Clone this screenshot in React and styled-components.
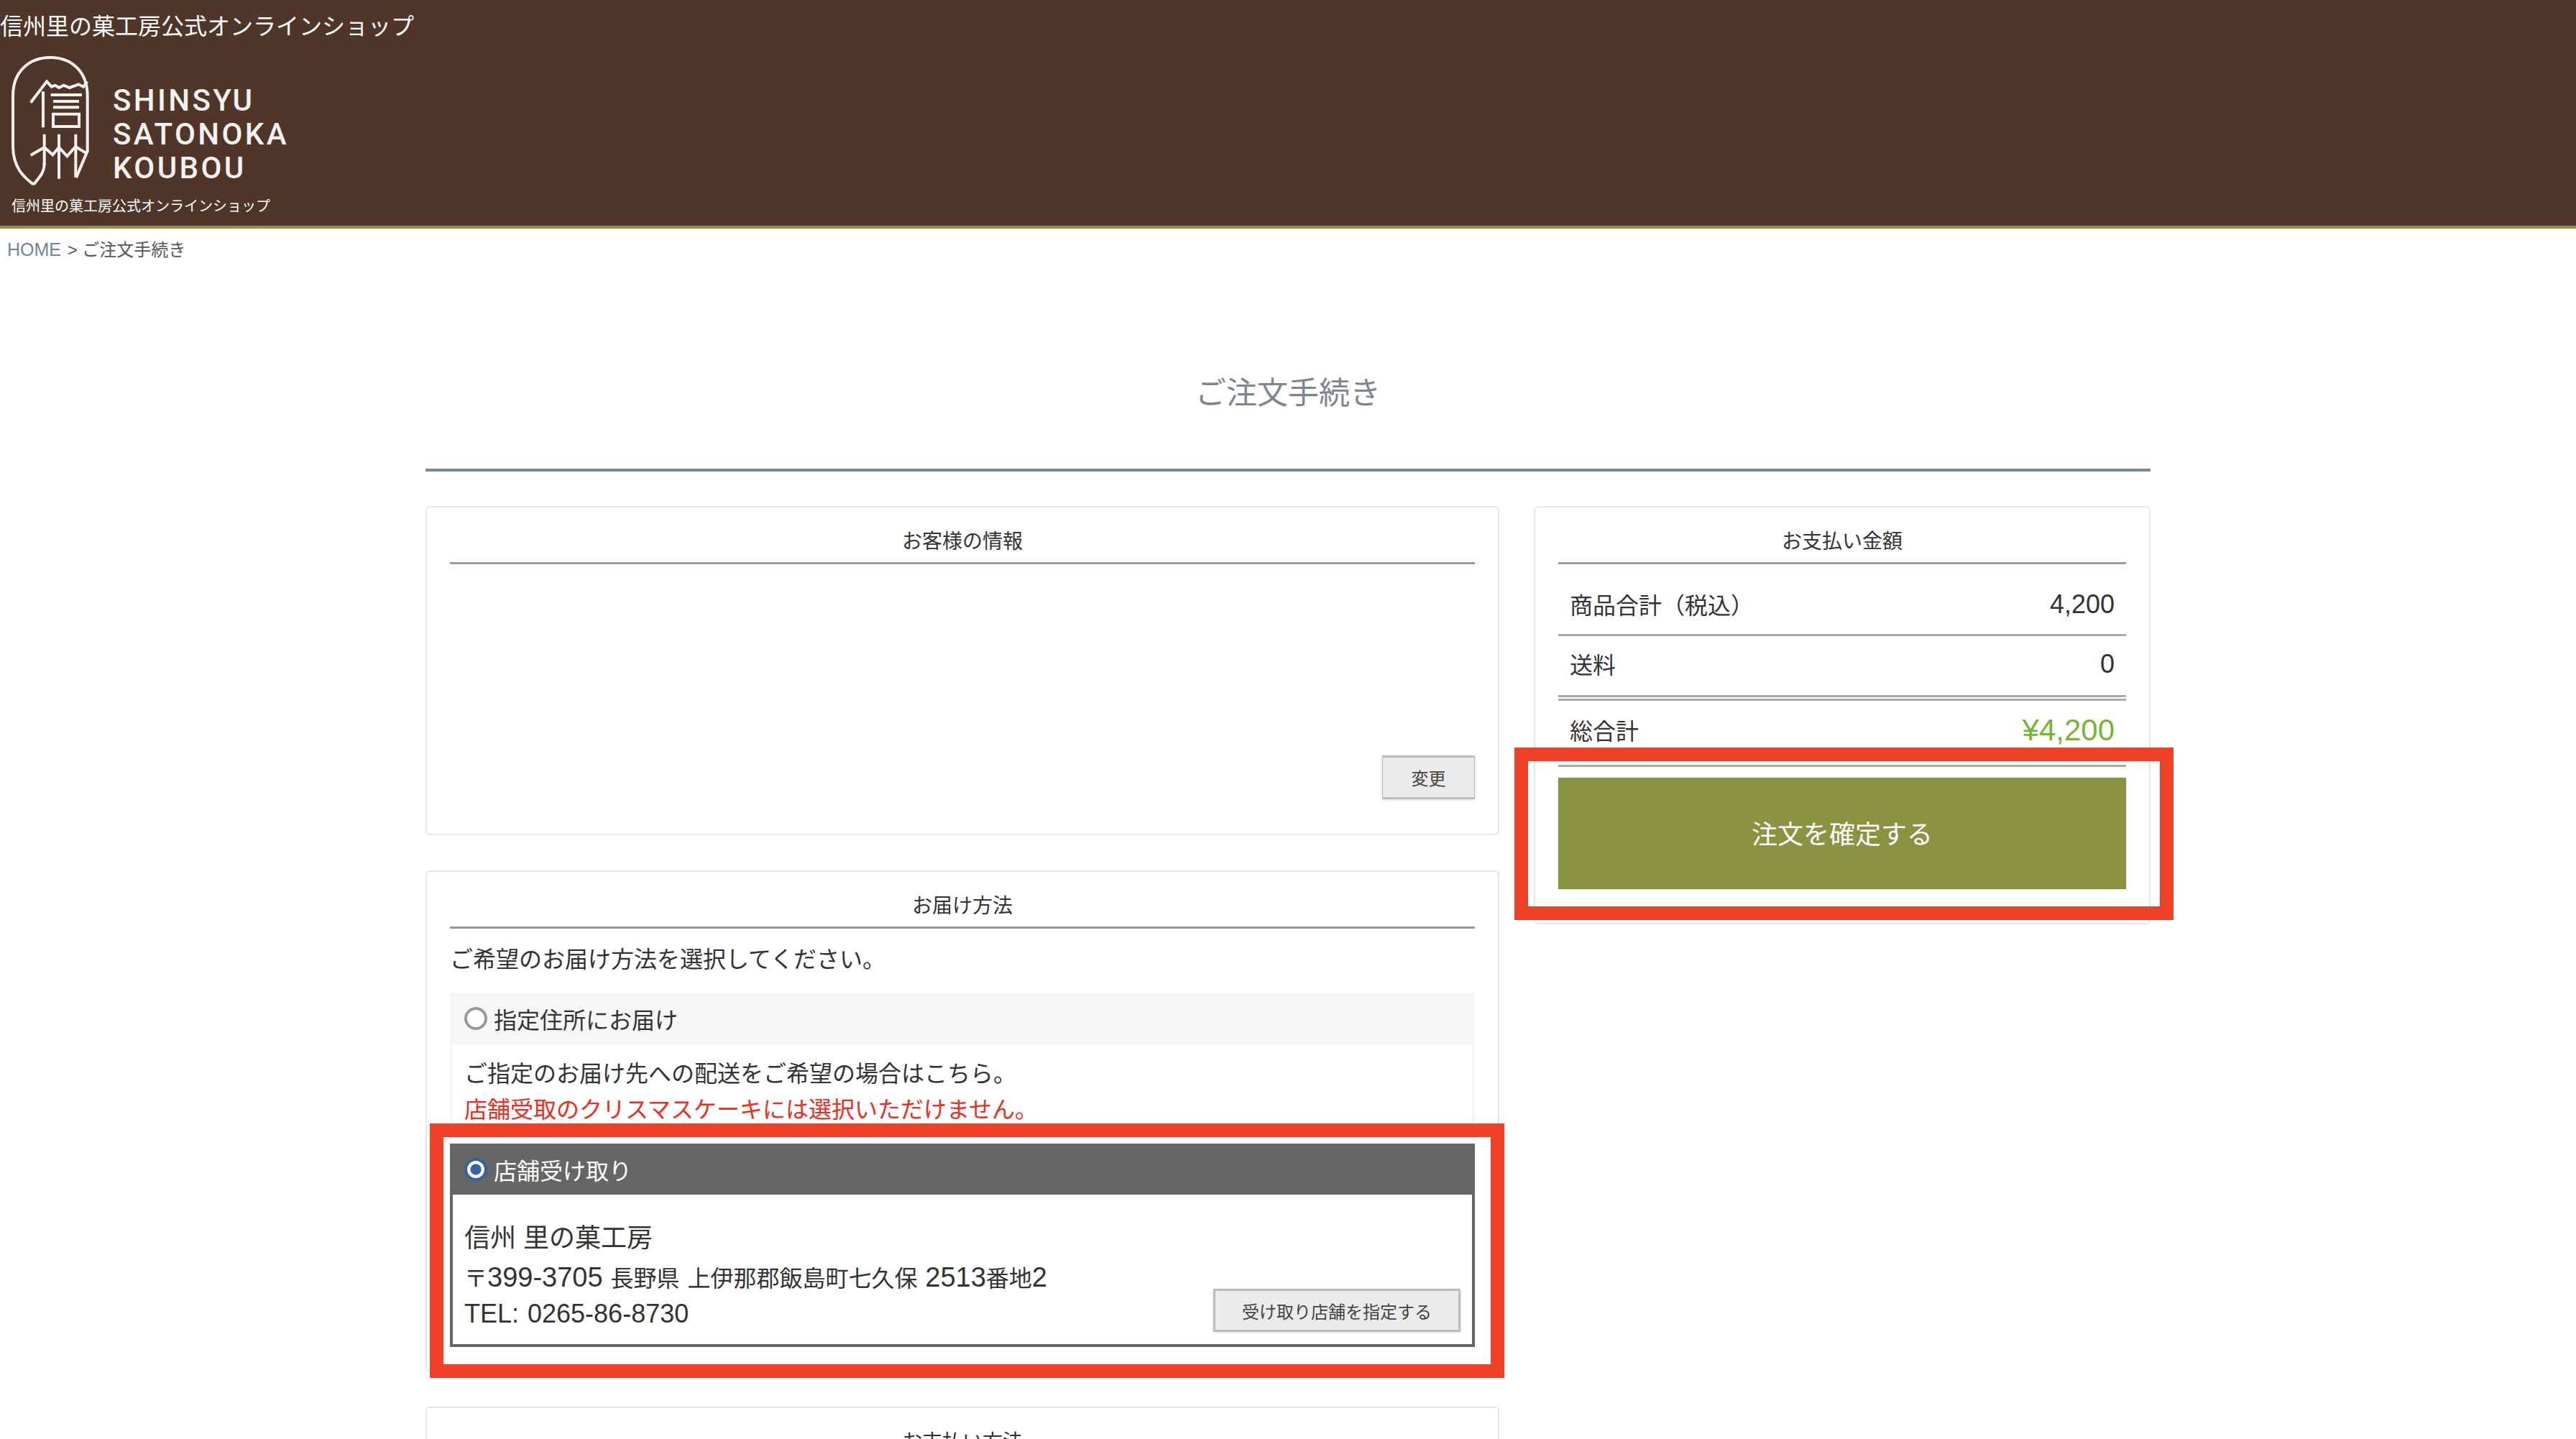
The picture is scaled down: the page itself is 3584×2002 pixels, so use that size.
import React from 'react'
import styled, { createGlobalStyle } from 'styled-components'

const GlobalStyle = createGlobalStyle`
  html, body {
    margin: 0;
    height: 2002px;
    overflow: hidden;
    background: #fff;
  }
  body {
    font-family: "Liberation Sans", "Noto Sans CJK JP", sans-serif;
    color: #333;
  }
  * { box-sizing: border-box; }
`

const TopBar = styled.header`
  height: 318px;
  background: #4f3629;
  border-bottom: 4px solid #8a9440;
  color: #fff;
`

const ShopName = styled.div`
  font-size: 32px;
  height: 70px;
  line-height: 74px;
`

const LogoRow = styled.div`
  display: flex;
  margin-left: 10px;
  gap: 22px;
`

const Wordmark = styled.div`
  padding-top: 46px;
  font-family: "Roboto", "Liberation Sans", sans-serif;
  font-weight: 500;
  font-size: 42px;
  line-height: 47px;
  letter-spacing: 3.4px;
  color: #f4f1ee;
`

const Caption = styled.div`
  margin: 7px 0 0 16px;
  font-size: 20px;
  line-height: 30px;
`

const Crumbs = styled.nav`
  height: 30px;
  margin-top: 14px;
  padding-left: 10px;
  font-size: 24px;
  line-height: 30px;
  color: #555;

  a { color: #71859a; text-decoration: none; font-size: 25px; margin-right: 2px; }
`

const Page = styled.main`
  width: 2400px;
  margin: 153px auto 0;
`

const PageTitle = styled.h1`
  margin: 0 0 48px;
  height: 141px;
  padding-top: 2px;
  border-bottom: 4px solid #7a8897;
  font-size: 43px;
  font-weight: 400;
  line-height: 60px;
  text-align: center;
  color: #7c8690;
`

const Columns = styled.div`
  display: grid;
  grid-template-columns: 1494px 858px;
  column-gap: 48px;
  align-items: start;
`

const LeftColumn = styled.div`
  display: flex;
  flex-direction: column;
  gap: 49px;
`

const Card = styled.section`
  border: 2px solid #e5e5e5;
  border-radius: 6px;
  padding: 0 32px;
  padding-bottom: ${p => p.$bottom || 32}px;
  background: #fff;
`

const CardTitle = styled.h2`
  margin: 0;
  padding: 30px 0 10px;
  border-bottom: 3px solid #999;
  font-size: 28px;
  font-weight: 400;
  line-height: 36px;
  text-align: center;
  color: #333;
`

const CustomerBody = styled.div`
  height: 266px;
`

const ButtonRow = styled.div`
  display: flex;
  justify-content: flex-end;
`

const GreyButton = styled.button`
  flex: none;
  height: ${p => p.$tall ? 61 : 60}px;
  width: ${p => p.$width}px;
  padding: 0;
  border: 3px solid #bdbdbd;
  border-left-width: ${p => p.$tall ? 1 : 3}px;
  border-right-width: ${p => p.$tall ? 1 : 3}px;
  background: #ebebeb;
  box-shadow: 0 1px 4px rgba(0, 0, 0, 0.15);
  font-family: inherit;
  font-size: 24px;
  color: #444;
`

const Intro = styled.p`
  margin: 18px 0 21px 0;
  font-size: 32px;
  line-height: 50px;
`

const OptionHead = styled.label`
  display: flex;
  align-items: center;
  gap: 9px;
  height: 72px;
  padding-left: 20px;
  background: ${p => p.$active ? '#666' : '#f6f6f6'};
  color: ${p => p.$active ? '#fff' : '#333'};
  font-size: 32px;
`

const Radio = styled.input.attrs({ type: 'radio', name: 'delivery' })`
  appearance: none;
  margin: 0;
  width: 32px;
  height: 32px;
  border-radius: 50%;
  border: 4px solid #999;
  background: #fff;

  &:checked {
    border-color: #3360a8;
    background: radial-gradient(circle, #3360a8 0 7px, #fff 8px);
  }
`

const PlainBody = styled.div`
  margin-bottom: 4px;
  padding: 16px 16px 18px;
  border: 4px solid #f6f6f6;
  border-top: 0;
  border-bottom: 0;
  font-size: 32px;
  line-height: 50px;
`

const Warning = styled.div`
  color: #ee2c20;
`

const StoreOption = styled.div`
  position: relative;
  border: 4px solid #666;
  border-top: 0;
`

const StoreHead = styled(OptionHead)`
  margin: 0 -4px;
  height: 71px;
`

const StoreBody = styled.div`
  display: flex;
  justify-content: space-between;
  align-items: flex-end;
  padding: 36px 16px 17px;
  font-size: 32px;
  line-height: 50px;
`

const StoreName = styled.div`
  font-size: 36px;
  margin-bottom: 4px;
`

const AddressLine = styled.div`
  height: ${p => p.$height || 50}px;
  word-spacing: 2px;
`

const Num = styled.span`
  font-size: ${p => p.$size || 36}px;
`

const Highlight = styled.div`
  position: absolute;
  top: ${p => p.$top}px;
  left: ${p => p.$left}px;
  right: ${p => p.$right}px;
  bottom: ${p => p.$bottom}px;
  border: 19px solid #ee4127;
  pointer-events: none;
`

const Row = styled.div`
  display: flex;
  justify-content: space-between;
  align-items: center;
  height: ${p => p.$height}px;
  padding: ${p => p.$shift > 0 ? p.$shift : 0}px 16px ${p => p.$shift < 0 ? -p.$shift : 0}px;
  border-bottom: ${p => p.$double ? '8px double #aaa' : '3px solid #aaa'};
  font-size: 32px;
`

const Amount = styled.span`
  padding-top: 2px;
  font-size: ${p => p.$total ? 42 : 36}px;
  color: ${p => p.$total ? '#76b52e' : '#333'};
`

const SubmitWrap = styled.div`
  position: relative;
  margin-top: 15px;
`

const SubmitButton = styled.button`
  display: block;
  width: 100%;
  height: 155px;
  padding: 0 0 3px;
  border: 0;
  background: #8a9440;
  box-shadow: 0 0 4px rgba(0, 0, 0, 0.15);
  font-family: inherit;
  font-size: 36px;
  color: #fff;
`

function Logo() {
  return (
    <svg width="125" height="195" viewBox="0 0 375 585" fill="none" stroke="#f4f1ee" strokeWidth="12">
      <path d="M110 560 C70 530 24 490 24 400 V190 C24 90 90 30 180 30 C270 30 335 90 335 190 V420 L288 532 M110 560 C135 530 155 510 155 470" />
      <path d="M98 218 L165 130 L185 152 L200 146 L216 156 L236 146 L260 156 L298 142 L318 152 L334 130" />
      <path d="M150 172 V322 M182 186 H312 M192 213 H300 M192 238 H300 M192 266 H300 V318 H192 Z" />
      <path d="M98 438 L155 405 L190 436 L216 405 L250 442 L285 402 L335 432" />
      <path d="M155 350 V480 M216 350 V536 M286 350 V530" />
    </svg>
  )
}

function App() {
  return (
    <>
      <GlobalStyle />
      <TopBar>
        <ShopName>信州里の菓工房公式オンラインショップ</ShopName>
        <LogoRow>
          <Logo />
          <Wordmark>
            <div>SHINSYU</div>
            <div>SATONOKA</div>
            <div>KOUBOU</div>
          </Wordmark>
        </LogoRow>
        <Caption>信州里の菓工房公式オンラインショップ</Caption>
      </TopBar>

      <Crumbs><a href="#home">HOME</a> &gt; ご注文手続き</Crumbs>

      <Page>
        <PageTitle>ご注文手続き</PageTitle>
        <Columns>
          <LeftColumn>
            <Card $bottom={48}>
              <CardTitle>お客様の情報</CardTitle>
              <CustomerBody />
              <ButtonRow>
                <GreyButton $tall $width={129}>変更</GreyButton>
              </ButtonRow>
            </Card>

            <Card>
              <CardTitle>お届け方法</CardTitle>
              <Intro>ご希望のお届け方法を選択してください。</Intro>

              <OptionHead>
                <Radio />
                指定住所にお届け
              </OptionHead>
              <PlainBody>
                <div>ご指定のお届け先への配送をご希望の場合はこちら。</div>
                <Warning>店舗受取のクリスマスケーキには選択いただけません。</Warning>
              </PlainBody>

              <StoreOption>
                <StoreHead $active>
                  <Radio defaultChecked />
                  店舗受け取り
                </StoreHead>
                <StoreBody>
                  <div>
                    <StoreName>信州 里の菓工房</StoreName>
                    <AddressLine $height={51}>〒<Num $size={38}>399-3705</Num> 長野県 上伊那郡飯島町七久保 <Num $size={38}>2513</Num>番地<Num $size={38}>2</Num></AddressLine>
                    <AddressLine><Num>TEL: 0265-86-8730</Num></AddressLine>
                  </div>
                  <GreyButton $width={344}>受け取り店舗を指定する</GreyButton>
                </StoreBody>
                <Highlight $top={-28} $left={-32} $right={-45} $bottom={-47} />
              </StoreOption>
            </Card>

            <Card>
              <CardTitle>お支払い方法</CardTitle>
            </Card>
          </LeftColumn>

          <Card $bottom={47}>
            <CardTitle>お支払い金額</CardTitle>
            <Row $height={100} $shift={12}>
              <span>商品合計（税込）</span>
              <Amount>4,200</Amount>
            </Row>
            <Row $height={90} $double $shift={-6}>
              <span>送料</span>
              <Amount>0</Amount>
            </Row>
            <Row $height={92} $shift={-10}>
              <span>総合計</span>
              <Amount $total>¥4,200</Amount>
            </Row>
            <SubmitWrap>
              <SubmitButton>注文を確定する</SubmitButton>
              <Highlight $top={-42} $left={-61} $right={-66} $bottom={-43} />
            </SubmitWrap>
          </Card>
        </Columns>
      </Page>
    </>
  )
}

export default App
